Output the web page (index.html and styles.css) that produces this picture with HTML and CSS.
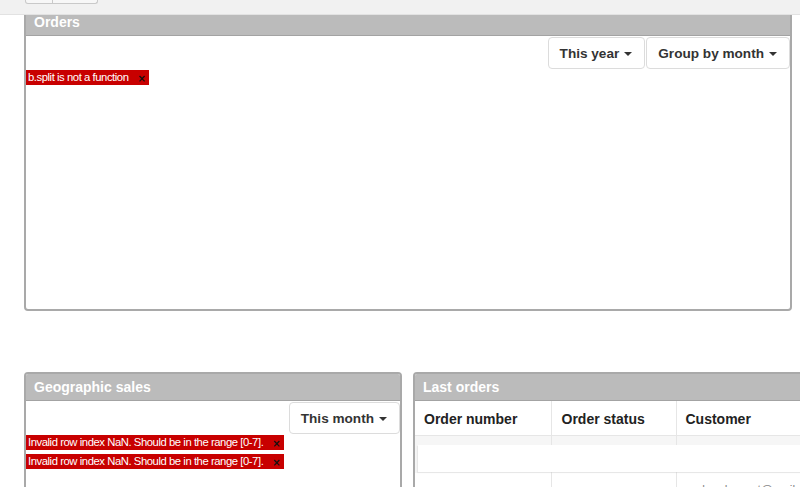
FILE: index.html
```html
<!DOCTYPE html>
<html>
<head>
<meta charset="utf-8">
<link rel="stylesheet" href="styles.css">
</head>
<body>
<div class="topbar">
  <div class="tb-group"><span class="tb-btn tb-a"></span><span class="tb-btn tb-b"></span></div>
</div>
<main class="page">
  <section class="panel orders">
    <header class="panel-head">Orders</header>
    <div class="panel-body orders-body">
      <div class="toolbar">
        <button class="dd">This year<span class="caret"></span></button>
        <button class="dd">Group by month<span class="caret"></span></button>
      </div>
      <div class="err"><span class="err-text">b.split is not a function</span><span class="x">×</span></div>
    </div>
  </section>

  <div class="row2">
    <section class="panel geo">
      <header class="panel-head">Geographic sales</header>
      <div class="panel-body">
        <div class="toolbar">
          <button class="dd">This month<span class="caret"></span></button>
        </div>
        <div class="err"><span class="err-text">Invalid row index NaN. Should be in the range [0-7].</span><span class="x">×</span></div>
        <div class="err"><span class="err-text">Invalid row index NaN. Should be in the range [0-7].</span><span class="x">×</span></div>
      </div>
    </section>

    <section class="panel last">
      <header class="panel-head">Last orders</header>
      <div class="panel-body last-body">
        <table class="tbl">
          <colgroup><col class="w1"><col class="w2"><col class="w3"></colgroup>
          <thead>
            <tr><th>Order number</th><th>Order status</th><th>Customer</th></tr>
          </thead>
          <tbody>
            <tr class="stripe"><td></td><td></td><td></td></tr>
            <tr class="row"><td><a class="lnk">SO0014-21</a></td><td><span class="badge b1"></span><span class="badge b2"></span></td><td class="cust">carlos.dumont@mail.com</td></tr>
          </tbody>
        </table>
        <div class="overlay"></div>
      </div>
    </section>
  </div>
</main>
</body>
</html>
```
FILE: styles.css
```css
html, body {
  margin: 0;
  padding: 0;
  background: #ffffff;
  overflow: hidden;
  height: 487px;
}
body {
  font-family: "Liberation Sans", Arial, sans-serif;
  color: #333;
}
.topbar {
  position: fixed;
  top: 0;
  left: 0;
  right: 0;
  height: 15px;
  background: #f1f1f1;
  border-bottom: 1px solid #e2e2e2;
  z-index: 5;
  padding-left: 25px;
  box-sizing: border-box;
}
.tb-group {
  display: flex;
  height: 4px;
}
.tb-btn {
  display: block;
  height: 3px;
  border: 1px solid #c9c9c9;
  border-top: none;
  background: #f7f7f7;
}
.tb-a { width: 26px; border-radius: 0 0 0 3px; }
.tb-b { width: 44px; border-left: none; border-radius: 0 0 3px 0; }

.page {
  padding: 7px 0 0 24px;
  width: 900px;
}
.panel {
  border: 2px solid #a9a9a9;
  border-radius: 4px;
  background: #fff;
  box-sizing: border-box;
}
.panel-head {
  background: #bbbbbb;
  color: #fff;
  font-weight: bold;
  font-size: 14px;
  height: 26px;
  line-height: 26px;
  padding-left: 8px;
  border-bottom: 1px solid #a3a3a3;
  border-radius: 2px 2px 0 0;
}
.orders { width: 768px; }
.orders-body { height: 273px; }
.toolbar {
  display: flex;
  justify-content: flex-end;
  gap: 1px;
  padding-top: 1px;
  margin-bottom: 1px;
}
.dd {
  display: flex;
  align-items: center;
  height: 32px;
  padding: 0 12px 0 11px;
  border: 1px solid #dcdcdc;
  border-radius: 4px;
  background: #fff;
  font-family: "Liberation Sans", Arial, sans-serif;
  font-weight: bold;
  font-size: 13.6px;
  color: #333;
}
.caret {
  display: inline-block;
  width: 0;
  height: 0;
  margin-left: 5px;
  margin-top: 1px;
  border-top: 4px solid #333;
  border-left: 4px solid transparent;
  border-right: 4px solid transparent;
}
.err {
  display: flex;
  align-items: center;
  width: fit-content;
  height: 15px;
  background: #c80000;
  margin-bottom: 4px;
  padding-left: 2px;
  padding-right: 3px;
}
.err-text {
  font-family: "Liberation Sans", Arial, sans-serif;
  font-size: 11.3px;
  letter-spacing: -0.45px;
  color: #fff;
  line-height: 15px;
}
.x {
  font-family: "DejaVu Sans", sans-serif;
  font-weight: bold;
  font-size: 10px;
  color: #111;
  margin-left: 9px;
  line-height: 15px;
  margin-top: 2px;
}

.row2 {
  display: flex;
  gap: 11px;
  margin-top: 61px;
}
.geo { width: 378px; height: 140px; }
.last { width: 400px; height: 140px; flex: none; }
.last-body { position: relative; }
.tbl {
  border-collapse: collapse;
  table-layout: fixed;
  width: 396px;
}
.w1 { width: 136px; }
.w2 { width: 125px; }
.w3 { width: 135px; }
.tbl th {
  text-align: left;
  font-size: 14px;
  font-weight: bold;
  color: #222;
  height: 34px;
  padding: 3px 0 0 9px;
  box-sizing: border-box;
  border-right: 1px solid #e6e6e6;
  border-bottom: 1px solid #e6e6e6;
}
.tbl th:nth-child(2) { padding-left: 10px; }
.tbl td {
  border-right: 1px solid #e6e6e6;
  padding: 0 0 0 9px;
}
.stripe td {
  background: #f6f6f6;
  height: 37px;
}
.row td { height: 30px; vertical-align: top; padding-top: 10px; white-space: nowrap; overflow: hidden; }
.lnk { color: #3c8dc4; font-size: 12px; }
.badge {
  display: inline-block;
  height: 10px;
  background: #6fae6f;
  margin-right: 4px;
}
.b1 { width: 24px; }
.b2 { width: 30px; }
.cust { color: #888; font-size: 12px; }
.overlay {
  position: absolute;
  left: 3px;
  right: 0;
  top: 44px;
  height: 27px;
  background: #fff;
  box-shadow: -1px 1px 1px rgba(0,0,0,0.06);
}
```
